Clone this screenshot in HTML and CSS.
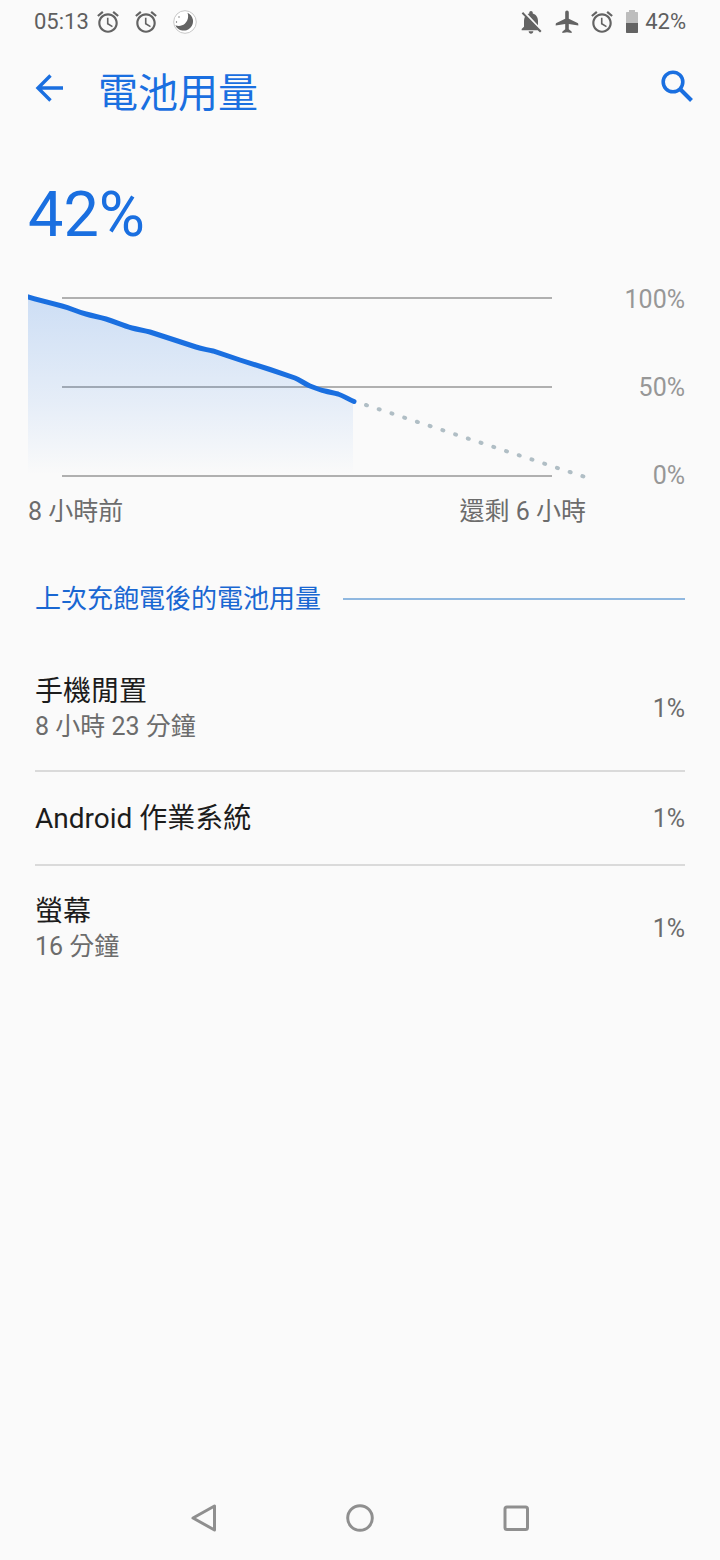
FILE: index.html
```html
<!DOCTYPE html>
<html lang="zh-Hant">
<head>
  <meta charset="utf-8">
  <meta name="viewport" content="width=device-width, initial-scale=1">
  <title>電池用量</title>
  <link rel="stylesheet" href="styles.css">
</head>
<body>
  <svg class="defs" width="0" height="0" aria-hidden="true">
    <symbol id="alarm" viewBox="0 0 24 24">
      <path d="M22 5.72l-4.6-3.86-1.29 1.53 4.6 3.86L22 5.72zM7.88 3.39L6.6 1.86 2 5.71l1.29 1.53 4.59-3.85zM12.5 8H11v6l4.75 2.85.75-1.23-4-2.37V8zM12 4c-4.97 0-9 4.03-9 9s4.02 9 9 9c4.97 0 9-4.03 9-9s-4.03-9-9-9zm0 16c-3.87 0-7-3.13-7-7s3.13-7 7-7 7 3.13 7 7-3.13 7-7 7z"/>
    </symbol>
  </svg>

  <div class="status-bar">
    <div class="status-group">
      <span>05:13</span>
      <div class="status-icons">
        <svg width="26" height="26"><use href="#alarm"/></svg>
        <svg width="26" height="26"><use href="#alarm"/></svg>
        <svg width="26" height="24" viewBox="0 0 26 24">
          <circle cx="14" cy="12" r="11.3" fill="#fff" stroke="#c8c8c8"/>
          <path d="M16.500 2.800a9.300 9.300 0 1 1-12.200 12.400c3.200 1.300 7 .7 9.500-1.500 3.200-2.800 4.100-7.200 2.700-10.900z"/>
          <circle cx="8" cy="7" r=".7"/>
          <circle cx="5.500" cy="12" r=".7"/>
        </svg>
      </div>
    </div>
    <div class="status-group">
      <div class="status-icons right">
        <svg width="28" height="28" viewBox="0 0 24 24">
          <path d="M20 18.690L7.840 6.140 5.270 3.490 4 4.760l2.800 2.800v.01c-.52.99-.8 2.160-.8 3.420v5l-2 2v1h13.730l2 2L21 19.720l-1-1.030zM12 22c1.110 0 2-.89 2-2h-4c0 1.110.89 2 2 2zm6-7.320V11c0-3.080-1.640-5.640-4.500-6.320V4c0-.83-.67-1.500-1.500-1.500s-1.500.67-1.500 1.500v.68c-.35.08-.9.26-1.440.56L18 14.680z"/>
        </svg>
        <svg width="24" height="24" viewBox="0 0 24 24">
          <path d="M12 .5c-1.100 0-1.800.8-1.800 2v6.200L1.400 13c-.5.3-.7.7-.7 1.200v1.300l9.500-1.600v5.300l-2.500 2c-.3.3-.4.600-.4 1v.9l4.700-.8 4.700.8v-.9c0-.4-.1-.7-.4-1l-2.500-2v-5.300l9.500 1.600v-1.300c0-.5-.2-.9-.7-1.200l-8.800-4.300V2.500c0-1.200-.7-2-1.800-2z"/>
        </svg>
        <svg width="26" height="26"><use href="#alarm"/></svg>
        <svg width="14" height="24" viewBox="0 0 14 24">
          <path fill="#bdbdbd" d="M4 0h6v2h2c.6 0 1 .4 1 1v11H1V3c0-.6.4-1 1-1h2z"/>
          <path d="M1 13h12v9c0 .6-.4 1-1 1H2c-.6 0-1-.4-1-1z"/>
        </svg>
      </div>
      <span>42%</span>
    </div>
  </div>

  <header>
    <button class="icon-button" aria-label="返回">
      <svg width="28" height="28" viewBox="0 0 28 28" fill="none" stroke="currentColor" stroke-width="3.400">
        <path d="M28 14H3M15.500 1.500L3 14l12.500 12.500"/>
      </svg>
    </button>
    <h1>電池用量</h1>
    <button class="icon-button search" aria-label="搜尋">
      <svg width="32" height="32" viewBox="0 0 32 32" fill="none" stroke="currentColor">
        <circle cx="12" cy="12" r="9.800" stroke-width="3.600"/>
        <path d="M19 19l11.500 11.500" stroke-width="4"/>
      </svg>
    </button>
  </header>

  <main>
    <p class="level">42%</p>

    <div class="chart">
      <svg class="plot" viewBox="0 0 558 206" role="img" aria-label="電池電量圖表">
        <defs>
          <linearGradient id="fill" x1="0" y1="12" x2="0" y2="190" gradientUnits="userSpaceOnUse">
            <stop offset="0" stop-color="#1a6fe0" stop-opacity=".2"/>
            <stop offset=".6" stop-color="#1a6fe0" stop-opacity=".09"/>
            <stop offset="1" stop-color="#1a6fe0" stop-opacity="0"/>
          </linearGradient>
        </defs>
        <path class="grid-line" d="M34 13H524M34 102H524M34 191H524"/>
        <path fill="url(#fill)" d="M0 12L20 17.500 34 21 58 29 78 34 104 43 122 47 142 53.500 168 62 185 66 212 75 242 84.500 267 93 282 101 297 106 310 109 325 116V191H0z"/>
        <path class="used" d="M-4 10.500L0 12C10 15 24 18.500 34 21C44 23.500 48 26.500 58 29C65 31 71 32 78 34C88 37 94 40.500 104 43C110 44.500 116 45.500 122 47L142 53.500L168 62C174 64 179 64.500 185 66L212 75L242 84.500L267 93C272 95 277 99 282 101C287 103 292 105 297 106C301 107 306 108 310 109C316 111 320 114 326 116.500"/>
        <path class="left" d="M338 120L557 192"/>
      </svg>
      <div class="y-axis">
        <span>100%</span>
        <span>50%</span>
        <span>0%</span>
      </div>
      <div class="x-axis">
        <span>8 小時前</span>
        <span>還剩 6 小時</span>
      </div>
    </div>

    <h2>上次充飽電後的電池用量</h2>

    <ul class="usage">
      <li>
        <div>
          <h3>手機閒置</h3>
          <p>8 小時 23 分鐘</p>
        </div>
        <span>1%</span>
      </li>
      <li>
        <div>
          <h3>Android 作業系統</h3>
        </div>
        <span>1%</span>
      </li>
      <li>
        <div>
          <h3>螢幕</h3>
          <p>16 分鐘</p>
        </div>
        <span>1%</span>
      </li>
    </ul>
  </main>

  <nav>
    <button aria-label="返回">
      <svg width="28" height="28" viewBox="0 0 28 28"><path d="M24.500 2v24L3 14z"/></svg>
    </button>
    <button aria-label="主畫面">
      <svg width="28" height="28" viewBox="0 0 28 28"><circle cx="14" cy="14" r="12.300"/></svg>
    </button>
    <button aria-label="最近使用">
      <svg width="28" height="28" viewBox="0 0 28 28"><rect x="3" y="3" width="22.500" height="22.500" rx="2"/></svg>
    </button>
  </nav>
</body>
</html>
```

FILE: styles.css
```css
* {
  box-sizing: border-box;
}

body {
  margin: 0;
  min-height: 100vh;
  display: flex;
  flex-direction: column;
  background-color: #fafafa;
  color: #6c6c6c;
  font-family: Roboto, "Noto Sans CJK TC", sans-serif;
  font-size: 25px;
}

h1, h2, h3, p, ul {
  margin: 0;
  padding: 0;
  font-weight: 400;
}

button {
  padding: 0;
  border: none;
  background: none;
  color: inherit;
  cursor: pointer;
}

svg {
  display: block;
}

.defs {
  position: absolute;
}

.status-bar {
  display: flex;
  justify-content: space-between;
  height: 43px;
  padding: 0 34px;
  font-size: 22px;
  color: #5f5f5f;
  fill: #636363;
}

.status-group {
  display: flex;
  align-items: center;
  gap: 6px;
}

.status-icons {
  display: flex;
  align-items: center;
  gap: 12px;
}

.status-icons.right {
  gap: 10px;
}

header {
  display: flex;
  align-items: center;
  height: 89px;
  padding: 0 27px 0 35px;
  color: #1a6fe0;
}

header h1 {
  flex: 1;
  margin-left: 35px;
  padding-top: 12px;
  font-size: 40px;
  line-height: 56px;
}

.search {
  padding-bottom: 4px;
}

.level {
  padding: 43px 28px 0;
  font-size: 63px;
  line-height: 80px;
  color: #1a6fe0;
}

.chart {
  display: grid;
  grid-template-columns: 1fr 99px;
  margin: 30px 35px 0 28px;
}

.plot {
  width: 100%;
  height: auto;
}

.grid-line {
  stroke: #b0b0b0;
  stroke-width: 2;
}

.used {
  fill: none;
  stroke: #1a6fe0;
  stroke-width: 5;
  stroke-linecap: round;
}

.left {
  stroke: #b0bec5;
  stroke-width: 4;
  stroke-linecap: round;
  stroke-dasharray: 1 12.400;
}

.y-axis {
  display: flex;
  flex-direction: column;
  justify-content: space-between;
  text-align: right;
  line-height: 30px;
  color: #979797;
}

.x-axis {
  display: flex;
  justify-content: space-between;
  line-height: 42px;
}

h2 {
  display: flex;
  align-items: center;
  gap: 22px;
  margin: 44px 35px 25px;
  font-size: 26px;
  line-height: 44px;
  color: #1967d2;
}

h2::after {
  content: "";
  flex: 1;
  height: 2px;
  background-color: #90b8e0;
}

.usage {
  margin: 0 35px;
  list-style: none;
}

.usage li {
  display: flex;
  align-items: center;
  justify-content: space-between;
  min-height: 94px;
  padding: 28px 0 26px;
  line-height: 34px;
}

.usage li + li {
  border-top: 2px solid #dadada;
}

.usage h3 {
  font-size: 28px;
  line-height: 36px;
  color: #1c1c1c;
}

nav {
  display: flex;
  justify-content: center;
  gap: 108px;
  height: 84px;
  margin-top: auto;
}

nav button {
  display: flex;
  align-items: center;
  justify-content: center;
  width: 48px;
}

nav svg {
  fill: none;
  stroke: #8f8f8f;
  stroke-width: 3;
  stroke-linejoin: round;
}
```
